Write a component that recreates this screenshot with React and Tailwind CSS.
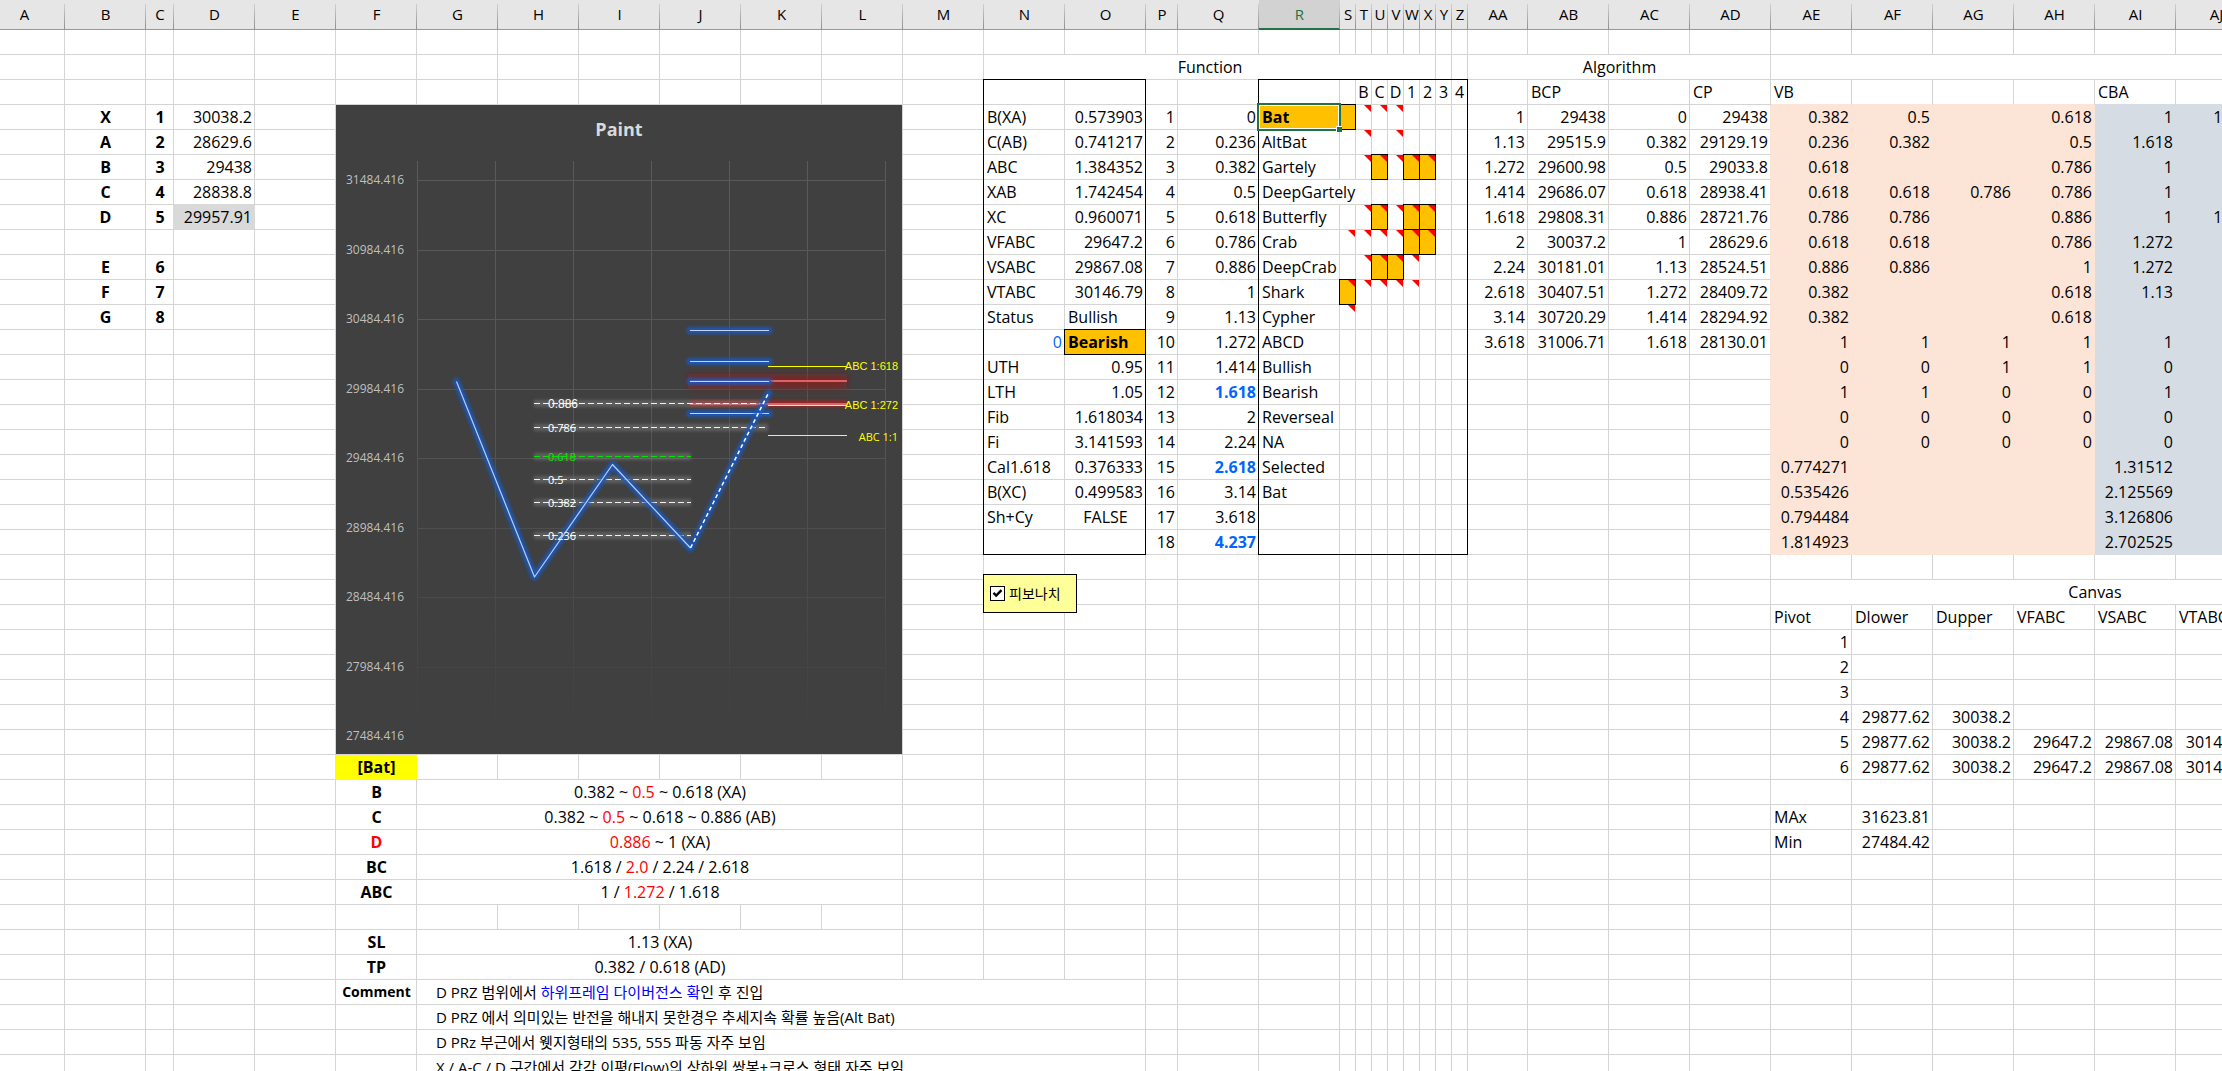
import clsx from 'clsx';

const COLUMNS = [
  ['A', 65], ['B', 81], ['C', 28], ['D', 81], ['E', 81], ['F', 81], ['G', 81], ['H', 81], ['I', 81],
  ['J', 81], ['K', 81], ['L', 81], ['M', 81], ['N', 81], ['O', 81], ['P', 32], ['Q', 81], ['R', 81],
  ['S', 16], ['T', 16], ['U', 16], ['V', 16], ['W', 16], ['X', 16], ['Y', 16], ['Z', 16],
  ['AA', 60], ['AB', 81], ['AC', 81], ['AD', 81], ['AE', 81], ['AF', 81], ['AG', 81], ['AH', 81],
  ['AI', 81], ['AJ', 81], ['AK', 81], ['AL', 81],
];
const NAMES = COLUMNS.map(([name]) => name);
const ROW_COUNT = 42;

const cells = {};

// Writes a list of values downwards, starting at the given cell
function fill(col, row, values, className) {
  values.forEach((value, i) => {
    if (value !== '') {
      cells[col + (row + i)] = { value, className };
    }
  });
}

const Red = ({ children }) => <span className="text-[#ff0000]">{children}</span>;

// Points of the pattern
fill('B', 4, ['X', 'A', 'B', 'C', 'D', '', 'E', 'F', 'G'], 'text-center font-bold');
fill('C', 4, ['1', '2', '3', '4', '5', '', '6', '7', '8'], 'text-center font-bold');
fill('D', 4, [30038.2, 28629.6, 29438, 28838.8, 29957.91]);

// Pattern description
fill('F', 31, ['B', 'C', <Red key="d">D</Red>, 'BC', 'ABC', '', 'SL', 'TP'], 'text-center font-bold');
cells.F30 = { value: '[Bat]', className: 'text-center font-bold' };
cells.F39 = { value: 'Comment', className: 'text-center text-sm/6 font-bold' };
cells.F4 = { chart: true, colSpan: 7, rowSpan: 26 };

const rules = {
  31: <>0.382 ~ <Red>0.5</Red> ~ 0.618 (XA)</>,
  32: <>0.382 ~ <Red>0.5</Red> ~ 0.618 ~ 0.886 (AB)</>,
  33: <><Red>0.886</Red> ~ 1 (XA)</>,
  34: <>1.618 / <Red>2.0</Red> / 2.24 / 2.618</>,
  35: <>1 / <Red>1.272</Red> / 1.618</>,
  37: '1.13 (XA)',
  38: '0.382 / 0.618 (AD)',
};
Object.entries(rules).forEach(([row, value]) => {
  cells['G' + row] = { value, colSpan: 6, className: 'text-center' };
});

const comments = [
  <>D PRZ 범위에서 <span className="text-[#0000ff]">하위프레임 다이버전스 확</span>인 후 진입</>,
  'D PRZ 에서 의미있는 반전을 해내지 못한경우 추세지속 확률 높음(Alt Bat)',
  'D PRz 부근에서 웻지형태의 535, 555 파동 자주 보임',
  'X / A-C / D 구간에서 각각 이평(Flow)의 상하위 쌍봉+크로스 형태 자주 보임',
];
comments.forEach((value, i) => {
  cells['G' + (39 + i)] = { value, colSpan: 9, padding: 'pl-[19px]', className: 'text-[15px]/6' };
});

// Function block
cells.N2 = { value: 'Function', colSpan: 11, className: 'text-center' };
fill('N', 4, ['B(XA)', 'C(AB)', 'ABC', 'XAB', 'XC', 'VFABC', 'VSABC', 'VTABC', 'Status', '', 'UTH', 'LTH', 'Fib', 'Fi', 'Cal1.618', 'B(XC)', 'Sh+Cy']);
cells.N13 = { value: 0, className: 'text-[#0066ff]' };
fill('O', 4, [0.573903, 0.741217, 1.384352, 1.742454, 0.960071, 29647.2, 29867.08, 30146.79, 'Bullish', 'Bearish', 0.95, 1.05, 1.618034, 3.141593, 0.376333, 0.499583]);
cells.O13 = { value: 'Bearish', marked: true, className: 'font-bold' };
cells.O20 = { value: 'FALSE', className: 'text-center' };
fill('P', 4, Array.from({ length: 18 }, (_, i) => i + 1));
fill('Q', 4, [0, 0.236, 0.382, 0.5, 0.618, 0.786, 0.886, 1, 1.13, 1.272, 1.414, 1.618, 2, 2.24, 2.618, 3.14, 3.618, 4.237]);
['Q15', 'Q18', 'Q21'].forEach((key) => {
  cells[key].className = 'font-bold text-[#0066ff]';
});
fill('R', 4, ['Bat', 'AltBat', 'Gartely', 'DeepGartely', 'Butterfly', 'Crab', 'DeepCrab', 'Shark', 'Cypher', 'ABCD', 'Bullish', 'Bearish', 'Reverseal', 'NA', 'Selected', 'Bat']);
cells.R4 = { value: 'Bat', selected: true, className: 'font-bold' };
cells.R7.colSpan = 3;
['B', 'C', 'D', '1', '2', '3', '4'].forEach((value, i) => {
  cells[NAMES[19 + i] + 3] = { value, padding: 'p-0', className: 'text-center' };
});

// Matches are filled, notes get a red corner
'S4 U6 W6 X6 U8 W8 X8 W9 X9 U10 V10 S11'.split(' ').forEach((key) => {
  cells[key] = { marked: true };
});
'T4 U4 V4 T5 V5 T6 U6 V6 W6 X6 T8 U8 V8 W8 X8 S9 T9 U9 V9 W9 X9 T10 U10 V10 W10 S11 T11 U11 V11 W11 S12'
  .split(' ')
  .forEach((key) => {
    cells[key] = { ...cells[key], note: true };
  });

// Outlined blocks
cells.N3 = { box: 'w-[163px] h-[476px]' };
cells.R3 = { box: 'w-[210px] h-[476px]' };
cells.N22 = { toggle: true };

// Algorithm block
cells.AA2 = { value: 'Algorithm', colSpan: 4, className: 'text-center' };
cells.AE2 = { colSpan: 8 };
cells.AB3 = { value: 'BCP' };
cells.AD3 = { value: 'CP' };
cells.AE3 = { value: 'VB' };
cells.AI3 = { value: 'CBA' };
fill('AA', 4, [1, 1.13, 1.272, 1.414, 1.618, 2, 2.24, 2.618, 3.14, 3.618]);
fill('AB', 4, [29438, 29515.9, 29600.98, 29686.07, 29808.31, 30037.2, 30181.01, 30407.51, 30720.29, 31006.71]);
fill('AC', 4, [0, 0.382, 0.5, 0.618, 0.886, 1, 1.13, 1.272, 1.414, 1.618]);
fill('AD', 4, [29438, 29129.19, 29033.8, 28938.41, 28721.76, 28629.6, 28524.51, 28409.72, 28294.92, 28130.01]);
fill('AE', 4, [0.382, 0.236, 0.618, 0.618, 0.786, 0.618, 0.886, 0.382, 0.382, 1, 0, 1, 0, 0, 0.774271, 0.535426, 0.794484, 1.814923]);
fill('AF', 4, [0.5, 0.382, '', 0.618, 0.786, 0.618, 0.886, '', '', 1, 0, 1, 0, 0]);
fill('AG', 7, [0.786, '', '', '', '', '', 1, 1, 0, 0, 0]);
fill('AH', 4, [0.618, 0.5, 0.786, 0.786, 0.886, 0.786, 1, 0.618, 0.618, 1, 1, 0, 0, 0]);
fill('AI', 4, [1, 1.618, 1, 1, 1, 1.272, 1.272, 1.13, '', 1, 0, 1, 0, 0, 1.31512, 2.125569, 3.126806, 2.702525]);
fill('AJ', 4, [1.618, '', '', '', 1.618]);

// Canvas block
cells.AE23 = { value: 'Canvas', colSpan: 8, className: 'text-center' };
fill('AE', 24, ['Pivot', 1, 2, 3, 4, 5, 6, '', 'MAx', 'Min']);
fill('AF', 24, ['Dlower', '', '', '', 29877.62, 29877.62, 29877.62, '', 31623.81, 27484.42]);
fill('AG', 24, ['Dupper', '', '', '', 30038.2, 30038.2, 30038.2]);
fill('AH', 24, ['VFABC', '', '', '', '', 29647.2, 29647.2]);
fill('AI', 24, ['VSABC', '', '', '', '', 29867.08, 29867.08]);
fill('AJ', 24, ['VTABC', '', '', '', '', 30146.79, 30146.79]);

// Cells hidden under a merged neighbour
const covered = new Set();
Object.entries(cells).forEach(([key, { colSpan = 1, rowSpan = 1 }]) => {
  const [, col, row] = key.match(/^([A-Z]+)(\d+)$/);
  const start = NAMES.indexOf(col);
  for (let r = 0; r < rowSpan; r++) {
    for (let c = 0; c < colSpan; c++) {
      if (r || c) covered.add(NAMES[start + c] + (Number(row) + r));
    }
  }
});

function paintOf(col, row) {
  const i = NAMES.indexOf(col);
  if (col === 'D' && row === 8) return 'gray';
  if (col === 'F' && row === 30) return 'yellow';
  if (row < 4 || row > 21) return null;
  if (i >= 30 && i <= 33) return 'peach';
  return i >= 34 ? 'blue' : null;
}

const BG = { gray: 'bg-[#d9d9d9]', yellow: 'bg-[#ffff00]', peach: 'bg-[#fce4d6]', blue: 'bg-[#d6dce4]' };
const RIGHT = { gray: 'border-r-[#d9d9d9]', yellow: 'border-r-[#ffff00]', peach: 'border-r-[#fce4d6]', blue: 'border-r-[#d6dce4]' };
const BOTTOM = { gray: 'border-b-[#d9d9d9]', yellow: 'border-b-[#ffff00]', peach: 'border-b-[#fce4d6]', blue: 'border-b-[#d6dce4]' };

const priceY = (price) => 180 + ((31484.416 - price) / 500) * 69.5;

function Segments({ lines, ...rest }) {
  return (
    <g {...rest}>
      {lines.map(([x1, x2, y]) => (
        <line key={`${x1}-${y}`} x1={x1} x2={x2} y1={y} y2={y} />
      ))}
    </g>
  );
}

const BLUE_LINES = [[690, 769, 330.5], [690, 769, 361.5], [690, 769, 381.5], [690, 769, 413.5]];
const WHITE_LINES = [[534, 768, 403.5], [534, 768, 427.5], [534, 691, 479.5], [534, 691, 502.5], [534, 691, 535.5]];
const YELLOW_LINES = [[768, 847, 366.5], [768, 847, 405.5], [768, 847, 435.5]];
const GREEN_LINES = [[534, 691, 456.5]];

function PaintChart() {
  const ticks = Array.from({ length: 9 }, (_, i) => 31484.416 - i * 500);
  return (
    <svg
      viewBox="336 105 566 649"
      role="img"
      aria-label="Paint"
      className="block h-[649px] w-full bg-[#404040]"
    >
      <defs>
        <filter id="glow" filterUnits="userSpaceOnUse" x="336" y="105" width="566" height="649">
          <feGaussianBlur stdDeviation="1.6" />
        </filter>
        <filter id="haze" filterUnits="userSpaceOnUse" x="336" y="105" width="566" height="649">
          <feGaussianBlur stdDeviation="3.2" />
        </filter>
        <linearGradient id="fade" gradientUnits="userSpaceOnUse" x1="0" y1="161" x2="0" y2="736">
          <stop offset="0" stopColor="#5a5a5a" />
          <stop offset="0.45" stopColor="#565656" />
          <stop offset="1" stopColor="#404040" />
        </linearGradient>
      </defs>

      <text x="619" y="136" textAnchor="middle" className="fill-[#d9d9d9] text-lg font-bold">Paint</text>

      {/* Grid */}
      <g fill="url(#fade)">
        {[417, 495, 573, 651, 729, 807, 885].map((x) => (
          <rect key={x} x={x} y="161" width="1" height="575" />
        ))}
        {ticks.slice(0, 8).map((tick) => (
          <rect key={tick} x="417" y={Math.round(priceY(tick))} width="469" height="1" />
        ))}
      </g>
      {ticks.map((tick) => (
        <text key={tick} x="404" y={Math.round(priceY(tick)) + 4} textAnchor="end" className="fill-[#bfbfbf] text-xs">
          {tick.toFixed(3)}
        </text>
      ))}

      {/* Target zone */}
      <Segments lines={[[688, 847, 381.5]]} stroke="#a01818" strokeOpacity="0.6" strokeWidth="14" filter="url(#haze)" />
      <Segments lines={[[690, 847, 403.5]]} stroke="#a02020" strokeOpacity="0.8" strokeWidth="7" filter="url(#glow)" />
      <Segments lines={[[690, 847, 381], [690, 847, 404]]} stroke="#dc6466" strokeWidth="2" />

      {/* Retracement levels */}
      <Segments lines={[...WHITE_LINES, ...GREEN_LINES]} stroke="#8c8c8c" strokeOpacity="0.4" strokeWidth="7" filter="url(#glow)" />
      <Segments lines={WHITE_LINES} stroke="#f2f2f2" strokeDasharray="6 3" />
      <Segments lines={GREEN_LINES} stroke="#00e600" strokeDasharray="6 3" />

      {/* Extension levels */}
      <Segments lines={BLUE_LINES} stroke="#1658c0" strokeOpacity="0.85" strokeWidth="7" strokeLinecap="round" filter="url(#glow)" />
      <Segments lines={BLUE_LINES} stroke="#c3d4f2" />

      {/* Price legs */}
      <g fill="none" strokeLinejoin="round">
        <g stroke="#1658c0" strokeOpacity="0.85" strokeWidth="7" strokeLinecap="round" filter="url(#glow)">
          <path d="M456.5 381.5L534.5 577L612.5 464.5L690.5 548" />
          <path d="M690.5 548L768.5 393" />
        </g>
        <path d="M456.5 381.5L534.5 577L612.5 464.5L690.5 548" stroke="#b9cdf0" strokeWidth="1.2" />
        <path d="M690.5 548L768.5 393" stroke="#ffffff" strokeWidth="1.5" strokeDasharray="4 3" />
      </g>

      <Segments lines={YELLOW_LINES} stroke="#ffff00" />

      <g className="fill-white text-[11px]">
        <text x="548" y="408" className="font-[family-name:'Liberation_Sans',sans-serif] text-xs">0.886</text>
        <text x="548" y="432">0.786</text>
        <text x="548" y="461" className="fill-[#00e600]">0.618</text>
        <text x="548" y="484">0.5</text>
        <text x="548" y="507">0.382</text>
        <text x="548" y="540">0.236</text>
      </g>
      <g className="fill-[#ffff00] text-[11px]" textAnchor="end">
        <text x="898" y="370" className="font-[family-name:'Liberation_Sans',sans-serif]">ABC 1:618</text>
        <text x="898" y="409" className="font-[family-name:'Liberation_Sans',sans-serif]">ABC 1:272</text>
        <text x="898" y="441">ABC 1:1</text>
      </g>
    </svg>
  );
}

function FiboToggle() {
  return (
    <label className="absolute top-[19px] -left-px z-10 flex h-[39px] w-[94px] items-center gap-1 border border-black bg-[#ffff99] pl-1.5 text-sm">
      <span className="grid size-[15px] shrink-0">
        <input
          type="checkbox"
          defaultChecked
          className="peer col-start-1 row-start-1 size-[15px] appearance-none border border-black bg-white"
        />
        <svg
          viewBox="0 0 15 15"
          className="pointer-events-none invisible col-start-1 row-start-1 size-[15px] fill-none stroke-black stroke-[2.4] peer-checked:visible"
        >
          <path d="M3.5 6.8L6.2 9.6L11.5 4.2" />
        </svg>
      </span>
      피보나치
    </label>
  );
}

function Cell({ col, row }) {
  const cell = cells[col + row] || {};
  const { value, className, padding, colSpan, rowSpan, chart, marked, note, selected, box, toggle } = cell;
  const last = NAMES.indexOf(col) + (colSpan || 1) - 1;
  const paint = paintOf(col, row);
  const rightPaint = paint || paintOf(NAMES[last + 1], row);
  const bottomPaint = paint || paintOf(col, row + 1);
  const overlaid = marked || note || selected || box || toggle;

  return (
    <td
      colSpan={colSpan}
      rowSpan={rowSpan}
      className={clsx(
        'h-[25px] border-r border-b',
        padding || (chart ? 'p-0' : 'pr-0.5 pl-[3px]'),
        overlaid && 'relative',
        typeof value === 'number' && 'text-right',
        paint && BG[paint],
        rightPaint ? RIGHT[rightPaint] : 'border-r-[#d4d4d4]',
        bottomPaint ? BOTTOM[bottomPaint] : 'border-b-[#d4d4d4]',
        className,
      )}
    >
      {marked && <div className="absolute -inset-px border border-black bg-[#ffc000]" />}
      {selected && (
        <div className="absolute -inset-0.5 z-20 border-2 border-[#217346] bg-[#ffc000] shadow-[inset_0_0_0_1px_#fff]">
          <div className="absolute -right-[3px] -bottom-[3px] size-[6px] border-t border-l border-white bg-[#217346]" />
        </div>
      )}
      {note && (
        <div className="absolute top-0 right-0 border-t-[7px] border-l-[7px] border-t-[#ff0000] border-l-transparent" />
      )}
      {box && <div className={clsx('pointer-events-none absolute -top-px -left-px z-10 border border-black', box)} />}
      {chart && <PaintChart />}
      {toggle && <FiboToggle />}
      {marked || selected ? <span className="relative z-20">{value}</span> : value}
    </td>
  );
}

export default function App() {
  const rows = Array.from({ length: ROW_COUNT }, (_, i) => i + 1);
  return (
    <div className="h-screen overflow-hidden bg-white font-[family-name:'Open_Sans','Noto_Sans','Noto_Sans_CJK_KR',sans-serif] text-base/6 text-black">
      <table className="w-full table-fixed border-separate border-spacing-0 whitespace-nowrap">
        <colgroup>
          {COLUMNS.map(([name, width]) => (
            <col key={name} style={{ width }} />
          ))}
        </colgroup>
        <thead>
          <tr>
            {NAMES.map((name) => (
              <th
                key={name}
                scope="col"
                className={clsx(
                  'relative h-[30px] border-b pt-0 pb-0.5 pl-0 text-[15px]/6 font-normal',
                  name === 'A' ? 'pr-4' : 'pr-0',
                  name === 'R' ? 'border-b-[#217346] bg-[#d2d2d2] text-[#217346] shadow-[inset_0_-1px_0_#217346]' : 'border-b-[#999999] bg-[#e6e6e6]',
                )}
              >
                {name === 'AK' || name === 'AL' ? null : name}
                <span className="absolute top-1 right-0 bottom-0 w-px bg-linear-to-b from-[#d0d0d0] to-[#909090]" />
              </th>
            ))}
          </tr>
        </thead>
        <tbody>
          {rows.map((row) => (
            <tr key={row}>
              {NAMES.filter((name) => !covered.has(name + row)).map((name) => (
                <Cell key={name} col={name} row={row} />
              ))}
            </tr>
          ))}
        </tbody>
      </table>
    </div>
  );
}
